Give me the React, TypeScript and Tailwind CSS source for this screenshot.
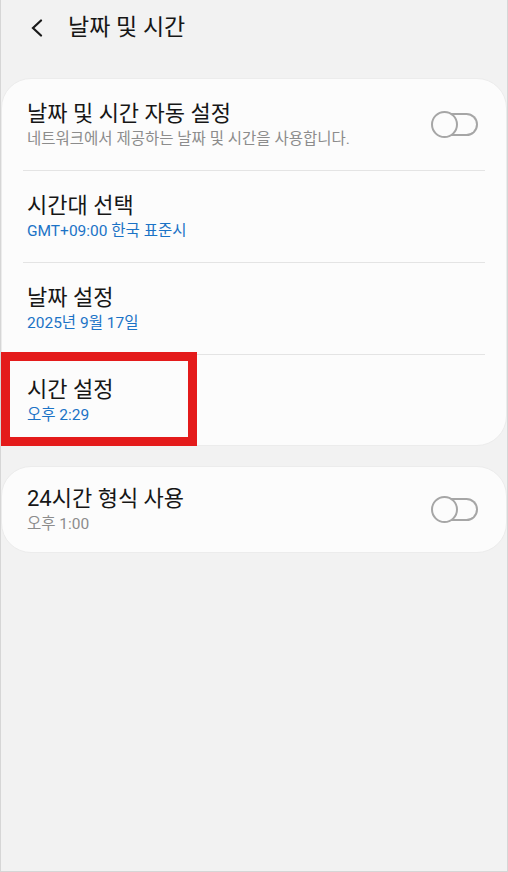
const font = { fontFamily: "Roboto, 'Noto Sans CJK KR', sans-serif" };

function Toggle() {
  return (
    <div className="relative h-[27px] w-[47px] shrink-0">
      <div className="absolute left-[18px] top-[2px] h-[23px] w-[29px] rounded-r-full border-2 border-l-0 border-[#a6a6a6]" />
      <div className="absolute left-0 top-0 h-[27px] w-[27px] rounded-full border-2 border-[#a6a6a6] bg-[#fcfcfc]" />
    </div>
  );
}

type RowProps = {
  title: string;
  sub: string;
  blue?: boolean;
  toggle?: boolean;
  divider?: boolean;
  h?: string;
};

function Row({ title, sub, blue, toggle, divider, h = "h-[92px]" }: RowProps) {
  return (
    <div className="px-[21px]">
      <div
        className={`flex ${h} items-center justify-between pl-[4px] pr-[7px] ${
          divider ? "border-b border-[#e4e4e4]" : ""
        }`}
      >
        <div className="flex flex-col">
          <span className="text-[22px] leading-[29px] text-[#161616]">{title}</span>
          <span
            className={`text-[15.5px] leading-[22px] ${
              blue ? "text-[#1b73c6]" : "text-[#8c8c8c]"
            }`}
          >
            {sub}
          </span>
        </div>
        {toggle && <Toggle />}
      </div>
    </div>
  );
}

export default function App() {
  return (
    <div
      className="flex h-[872px] w-[508px] flex-col border-x border-b border-[#d6d6d6] bg-[#f2f2f2]"
      style={font}
    >
      {/* Header */}
      <div className="flex h-[57px] items-center pl-[29px]">
        <svg width="14" height="18" viewBox="0 0 14 18" fill="none" className="mb-[2px]">
          <path d="M11 1.5L3 9l8 7.5" stroke="#1a1a1a" strokeWidth="2.2" strokeLinecap="round" />
        </svg>
        <h1 className="ml-[24px] text-[23px] text-[#161616]">날짜 및 시간</h1>
      </div>

      {/* Main card */}
      <div className="relative mt-[21px] rounded-[30px] border border-[#ececec] bg-[#fcfcfc]">
        <Row
          title="날짜 및 시간 자동 설정"
          sub="네트워크에서 제공하는 날짜 및 시간을 사용합니다."
          toggle
          divider
        />
        <Row title="시간대 선택" sub="GMT+09:00 한국 표준시" blue divider />
        <Row title="날짜 설정" sub="2025년 9월 17일" blue divider />
        <Row title="시간 설정" sub="오후 2:29" blue h="h-[90px]" />
        {/* highlight */}
        <div className="absolute bottom-[-1px] left-[-1px] h-[94px] w-[196px] border-[9px] border-[#e41b1b]" />
      </div>

      {/* Second card */}
      <div className="mt-[20px] rounded-[30px] border border-[#ececec] bg-[#fcfcfc]">
        <Row title="24시간 형식 사용" sub="오후 1:00" toggle h="h-[85px]" />
      </div>
    </div>
  );
}
